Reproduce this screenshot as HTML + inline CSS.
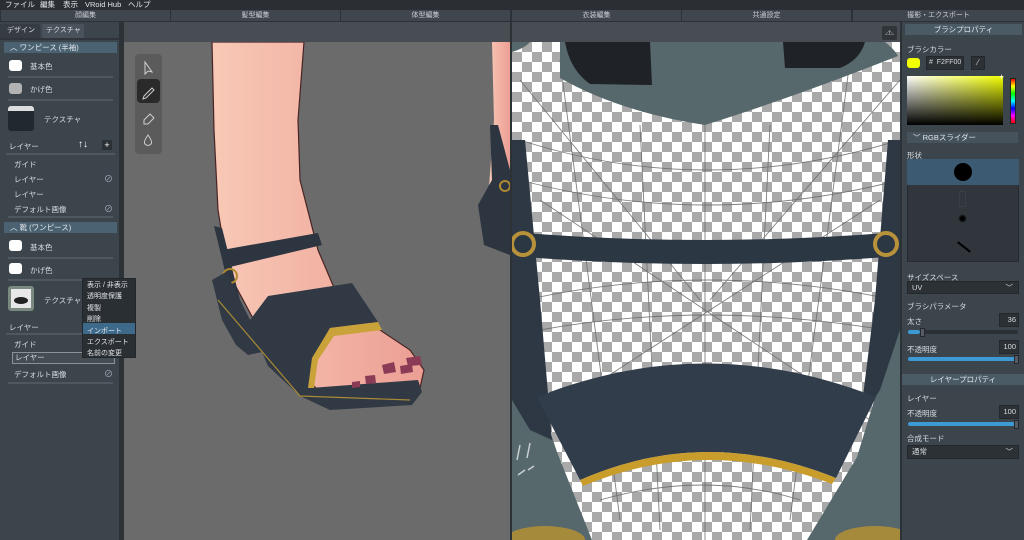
<!DOCTYPE html>
<html><head><meta charset="utf-8"><style>
*{margin:0;padding:0;box-sizing:border-box}
body{width:1024px;height:540px;overflow:hidden;background:#2d3237;font-family:"Liberation Sans","Noto Sans CJK JP",sans-serif;color:#d8dde2;font-size:7.5px;position:relative}
.a{position:absolute;white-space:nowrap}
.menu{left:0;top:0;width:1024px;height:10px;background:#2b2f33}
.tab{position:absolute;top:10px;height:11px;background:#3f464d;text-align:center;line-height:11px;font-size:7px;color:#c9ced3}
.panel{background:#3d454c}
.hdr{position:absolute;height:11px;background:#4b6272;line-height:11px;font-size:7.5px;color:#e3e8ec}
.sep{position:absolute;height:2px;background:#50585f}
.sw{position:absolute;width:13px;height:11px;border-radius:3px;background:#fff}
.cm{left:82px;top:278px;width:54px;height:80px;background:#2a2f34;border:1px solid #23272b}
.box{position:absolute;background:#2c3136;border:1px solid #24282c}
.slider{position:absolute;height:4px;background:#2b3035;border-radius:2px}
.fill{position:absolute;left:0;top:0;height:4px;background:#3e9ad4;border-radius:2px}
.knob{position:absolute;width:5px;height:9px;top:-2px;background:#555d64;border:1px solid #23272b}
</style></head><body>
<div class="a menu"></div>
<div class="a" style="left:5px;top:0;font-size:7.5px;line-height:10px;color:#e2e6ea">ファイル</div>
<div class="a" style="left:40px;top:0;font-size:7.5px;line-height:10px;color:#e2e6ea">編集</div>
<div class="a" style="left:63px;top:0;font-size:7.5px;line-height:10px;color:#e2e6ea">表示</div>
<div class="a" style="left:85px;top:0;font-size:7.5px;line-height:10px;color:#e2e6ea">VRoid Hub</div>
<div class="a" style="left:128px;top:0;font-size:7.5px;line-height:10px;color:#e2e6ea">ヘルプ</div>
<div class="tab" style="left:1px;width:169px">顔編集</div>
<div class="tab" style="left:171px;width:169px">髪型編集</div>
<div class="tab" style="left:341px;width:169px">体型編集</div>
<div class="tab" style="left:512px;width:169px">衣装編集</div>
<div class="tab" style="left:682px;width:169px">共通設定</div>
<div class="tab" style="left:853px;width:171px">撮影・エクスポート</div>

<!-- left panel -->
<div class="a panel" style="left:0;top:22px;width:119px;height:518px"></div>
<div class="a" style="left:0;top:24px;width:40px;height:14px;background:#353c42;line-height:14px;padding-left:7px;font-size:7px">デザイン</div>
<div class="a" style="left:42px;top:24px;width:42px;height:14px;background:#4a535b;line-height:14px;padding-left:4px;font-size:7px">テクスチャ</div>
<div class="a" style="left:0;top:38px;width:119px;height:2px;background:#2f353a"></div>
<div class="hdr" style="left:4px;top:42px;width:113px;padding-left:6px">︿ ワンピース (半袖)</div>
<div class="sw" style="left:9px;top:60px"></div><div class="a" style="left:30px;top:61px">基本色</div>
<div class="sep" style="left:8px;top:76px;width:105px"></div>
<div class="sw" style="left:9px;top:83px;background:#b3b3b3"></div><div class="a" style="left:30px;top:84px">かげ色</div>
<div class="sep" style="left:8px;top:99px;width:105px"></div>
<div class="a" style="left:8px;top:106px;width:26px;height:25px;border-radius:3px;background:#202830;border-top:5px solid #ddd"></div>
<div class="a" style="left:44px;top:114px">テクスチャ</div>
<div class="a" style="left:9px;top:141px">レイヤー</div>
<div class="a" style="left:78px;top:139px;font-size:10px;font-weight:bold;color:#fff">↑↓</div>
<div class="a" style="left:102px;top:140px;width:10px;height:10px;background:#2c3136;color:#fff;font-size:9px;line-height:10px;text-align:center">+</div>
<div class="sep" style="left:6px;top:153px;width:109px"></div>
<div class="a" style="left:14px;top:159px">ガイド</div>
<div class="a" style="left:14px;top:174px">レイヤー</div><div class="a" style="left:104px;top:172px;color:#aab;font-size:9px">⊘</div>
<div class="a" style="left:14px;top:189px">レイヤー</div>
<div class="a" style="left:14px;top:204px">デフォルト画像</div><div class="a" style="left:104px;top:202px;color:#aab;font-size:9px">⊘</div>
<div class="sep" style="left:8px;top:216px;width:105px"></div>
<div class="hdr" style="left:4px;top:222px;width:113px;padding-left:6px">︿ 靴 (ワンピース)</div>
<div class="sw" style="left:9px;top:240px"></div><div class="a" style="left:30px;top:242px">基本色</div>
<div class="sep" style="left:8px;top:257px;width:105px"></div>
<div class="sw" style="left:9px;top:263px"></div><div class="a" style="left:30px;top:265px">かげ色</div>
<div class="sep" style="left:8px;top:279px;width:105px"></div>
<div class="a" style="left:8px;top:286px;width:26px;height:25px;border-radius:3px;background:#e8e8e8;border:3px solid #7a8a80"><div style="margin:8px 3px 0;height:7px;background:#222;border-radius:50%"></div></div>
<div class="a" style="left:44px;top:295px">テクスチャ</div>
<div class="a" style="left:9px;top:322px">レイヤー</div>
<div class="sep" style="left:6px;top:333px;width:109px"></div>
<div class="a" style="left:14px;top:339px">ガイド</div>
<div class="a" style="left:12px;top:352px;width:103px;height:12px;border:1px solid #8a9299;background:#454d54;padding-left:2px;line-height:10px">レイヤー</div>
<div class="a" style="left:14px;top:369px">デフォルト画像</div><div class="a" style="left:104px;top:367px;color:#aab;font-size:9px">⊘</div>
<div class="sep" style="left:8px;top:382px;width:105px"></div>

<!-- 3d viewport -->
<div class="a" style="left:124px;top:22px;width:386px;height:20px;background:#474d53"></div>
<div class="a" style="left:124px;top:42px;width:386px;height:498px;background:#6b6b6b"></div>
<svg class="a" style="left:124px;top:42px" width="386" height="498" viewBox="124 42 386 498">
<defs><linearGradient id="sk" x1="0" x2="1"><stop offset="0" stop-color="#f8c9b6"/><stop offset="1" stop-color="#ec9e94"/></linearGradient></defs>
<path d="M212,42 L304,42 L298,120 L300,180 L318,250 L335,290 L380,330 L410,350 L424,370 L420,388 L320,392 L262,335 L228,272 L218,210 L214,130 Z" fill="url(#sk)" stroke="#4a2424" stroke-width="1.2"/>
<path d="M222,250 L318,233 L322,245 L226,268 Z" fill="#2c3540"/>
<path d="M214,226 L222,228 L240,300 L262,345 L252,350 L232,300 Z" fill="#2c3540"/>
<circle cx="230" cy="276" r="7" fill="none" stroke="#b08a30" stroke-width="2"/>
<path d="M212,280 L226,272 L250,320 L268,296 L352,283 L378,322 L330,328 L312,360 L310,388 L418,380 L422,392 L412,405 L330,410 L300,396 L268,366 L262,352 L248,355 L236,345 L222,320 Z" fill="#303944"/>
<path d="M330,328 L378,322 L382,330 L334,336 L318,360 L314,388 L308,388 L312,358 Z" fill="#c9a23a"/>
<path d="M218,300 L300,396 L410,400" fill="none" stroke="#a98a35" stroke-width="1.2"/>
<path d="M382,365 L394,362 L396,372 L384,374Z M400,366 L412,364 L413,372 L401,374Z M365,376 L375,375 L376,383 L366,384Z M406,358 L420,356 L422,365 L408,366Z M352,382 L360,381 L360,387 L352,388Z" fill="#8b3b55"/>
<path d="M492,42 L510,42 L510,200 L488,200 L494,120 Z" fill="url(#sk)"/>
<path d="M490,125 L498,125 L510,170 L510,255 L484,245 L478,205 L492,180 Z" fill="#2c3540"/>
<circle cx="505" cy="186" r="5" fill="none" stroke="#b08a30" stroke-width="2"/>
</svg>
<div class="a" style="left:135px;top:54px;width:27px;height:100px;background:#5b5b5b;border-radius:4px"></div>
<div class="a" style="left:137px;top:79px;width:23px;height:24px;background:#2a2a2a;border-radius:4px"></div>
<svg class="a" style="left:135px;top:54px" width="27" height="100" fill="none" stroke="#cfcfcf" stroke-width="1">
<path d="M10,8 L10,20 L13,17 L17,18 Z"/>
<path d="M9,42 L17,34 L19,36 L11,44 L8,45 Z"/>
<path d="M9,66 L15,60 L19,64 L13,70 L9,70 Z"/>
<path d="M13,81 Q8,88 10,90 Q13,93 16,90 Q18,88 13,81 Z"/>
</svg>

<!-- texture panel -->
<div class="a" style="left:512px;top:22px;width:389px;height:20px;background:#474d53"></div>
<div class="a" style="left:882px;top:26px;width:15px;height:14px;background:#30353a;border-radius:2px;color:#aaa;font-size:6px;text-align:center;line-height:14px">◿◺</div>
<div class="a" style="left:512px;top:42px;width:389px;height:498px;background:#56686b;overflow:hidden">
<div style="position:absolute;left:0;top:0;width:389px;height:498px;background:repeating-conic-gradient(#a9a9a9 0 25%,#fff 0 50%) 0 0/20px 20px;clip-path:polygon(0 0,389px 0,389px 200px,380px 300px,345px 415px,295px 498px,80px 498px,45px 410px,15px 320px,0 240px)"></div>
<svg style="position:absolute;left:0;top:0" width="389" height="498" viewBox="512 42 389 498">
<g stroke="#6a6a6a" stroke-width="0.9" fill="none" opacity="0.85">
<path d="M520,140 Q705,200 900,140 M520,180 Q705,230 900,180 M525,300 Q705,260 895,300 M540,330 Q705,300 885,330 M600,500 Q705,470 800,500"/>
<path d="M560,60 L620,520 M640,125 L660,530 M705,125 L705,540 M770,125 L750,530 M850,60 L790,520 M520,80 L700,300 M900,80 L710,300 M540,200 L870,420 M880,200 L540,420"/>
</g>
<path d="M512,42 L530,42 Q525,48 512,52 Z" fill="#56686b"/>
<path d="M560,42 L885,42 Q895,50 898,56 Q800,95 705,125 Q620,112 560,78 Z" fill="#56686b"/>
<path d="M565,42 L650,42 L652,85 L590,84 Q570,70 565,42Z M783,42 L865,42 Q860,60 840,68 L785,68Z" fill="#1f2327"/>
<path d="M512,140 L525,140 L540,300 L552,440 L530,430 L512,400 Z M900,140 L888,140 L875,300 L860,420 L880,390 L900,330 Z" fill="#2e3845"/>
<path d="M512,232 Q705,248 900,232 L900,256 Q705,272 512,256 Z" fill="#2c3744"/>
<circle cx="523" cy="244" r="11" fill="none" stroke="#b8923a" stroke-width="4"/>
<circle cx="886" cy="244" r="11" fill="none" stroke="#b8923a" stroke-width="4"/>
<path d="M537,397 Q705,330 876,397 L836,478 Q705,425 580,480 Z" fill="#323d4c"/>
<path d="M580,480 Q705,425 836,478 L832,484 Q705,435 583,486 Z" fill="#c89d2c"/>
<ellipse cx="545" cy="540" rx="40" ry="14" fill="#a58a3c"/>
<ellipse cx="875" cy="540" rx="40" ry="14" fill="#a58a3c"/>
<path d="M520,445 L517,460 M530,443 L527,458 M518,475 L525,470 M528,470 L534,466" stroke="#c9cfd0" stroke-width="1.5"/>
</svg>
</div>
<div class="a" style="left:900px;top:22px;width:2px;height:518px;background:#2d3237"></div>

<!-- right panel -->
<div class="a panel" style="left:902px;top:22px;width:122px;height:518px"></div>
<div class="hdr" style="left:905px;top:24px;width:117px;text-align:center;background:#4a5b66">ブラシプロパティ</div>
<div class="a" style="left:907px;top:44px">ブラシカラー</div>
<div class="a" style="left:907px;top:58px;width:13px;height:10px;border-radius:3px;background:#f2ff00"></div>
<div class="box" style="left:926px;top:56px;width:38px;height:14px;line-height:12px;padding-left:2px;font-size:7px">#&nbsp; F2FF00</div>
<div class="box" style="left:971px;top:56px;width:14px;height:14px;color:#ccc;font-size:8px;text-align:center;line-height:12px">⁄</div>
<div class="a" style="left:907px;top:76px;width:96px;height:49px;background:linear-gradient(to top,#000,transparent),linear-gradient(to right,#fff,#f2ff00)"></div>
<div class="a" style="left:999px;top:72px;color:#fff;font-size:9px">+</div>
<div class="a" style="left:1010px;top:78px;width:6px;height:46px;border:1px solid #222;background:linear-gradient(#f00,#ff0,#0f0,#0ff,#00f,#f0f,#f00)"></div>
<div class="hdr" style="left:907px;top:132px;width:111px;padding-left:6px;background:#46525c">﹀ RGBスライダー</div>
<div class="a" style="left:907px;top:150px">形状</div>
<div class="a" style="left:907px;top:159px;width:112px;height:103px;background:#30363b;border:1px solid #272b2f"></div>
<div class="a" style="left:907px;top:159px;width:112px;height:26px;background:#3c5b72"></div>
<div class="a" style="left:954px;top:163px;width:18px;height:18px;border-radius:50%;background:#000"></div>
<div class="a" style="left:959px;top:191px;width:7px;height:16px;border:1px solid #3a4045"></div>
<div class="a" style="left:958px;top:214px;width:9px;height:9px;border-radius:50%;background:radial-gradient(#000 30%,transparent 70%)"></div>
<div class="a" style="left:956px;top:246px;width:16px;height:2px;background:#000;transform:rotate(38deg)"></div>
<div class="a" style="left:907px;top:272px">サイズスペース</div>
<div class="box" style="left:907px;top:281px;width:112px;height:13px;padding-left:4px;line-height:11px">UV<span style="position:absolute;right:5px">﹀</span></div>
<div class="a" style="left:907px;top:301px">ブラシパラメータ</div>
<div class="a" style="left:907px;top:316px">太さ</div>
<div class="box" style="left:999px;top:313px;width:20px;height:14px;text-align:right;padding-right:2px;line-height:12px">36</div>
<div class="slider" style="left:908px;top:330px;width:110px"><div class="fill" style="width:12px"></div><div class="knob" style="left:12px"></div></div>
<div class="a" style="left:907px;top:344px">不透明度</div>
<div class="box" style="left:999px;top:340px;width:20px;height:14px;text-align:right;padding-right:2px;line-height:12px">100</div>
<div class="slider" style="left:908px;top:357px;width:110px"><div class="fill" style="width:108px"></div><div class="knob" style="left:106px"></div></div>
<div class="hdr" style="left:902px;top:374px;width:122px;text-align:center;background:#4a5b66">レイヤープロパティ</div>
<div class="a" style="left:907px;top:393px">レイヤー</div>
<div class="a" style="left:907px;top:408px">不透明度</div>
<div class="box" style="left:999px;top:405px;width:20px;height:14px;text-align:right;padding-right:2px;line-height:12px">100</div>
<div class="slider" style="left:908px;top:422px;width:110px"><div class="fill" style="width:108px"></div><div class="knob" style="left:106px"></div></div>
<div class="a" style="left:907px;top:433px">合成モード</div>
<div class="box" style="left:907px;top:445px;width:112px;height:14px;padding-left:4px;line-height:12px">通常<span style="position:absolute;right:5px">﹀</span></div>

<!-- context menu -->
<div class="a cm"></div>
<div class="a" style="left:83px;top:323px;width:52px;height:11px;background:#3d6a8a"></div>
<div class="a" style="left:87px;top:280px;line-height:11.4px;font-size:7px;color:#e3e6ea">表示 / 非表示<br>透明度保護<br>複製<br>削除<br>インポート<br>エクスポート<br>名前の変更</div>
</body></html>
